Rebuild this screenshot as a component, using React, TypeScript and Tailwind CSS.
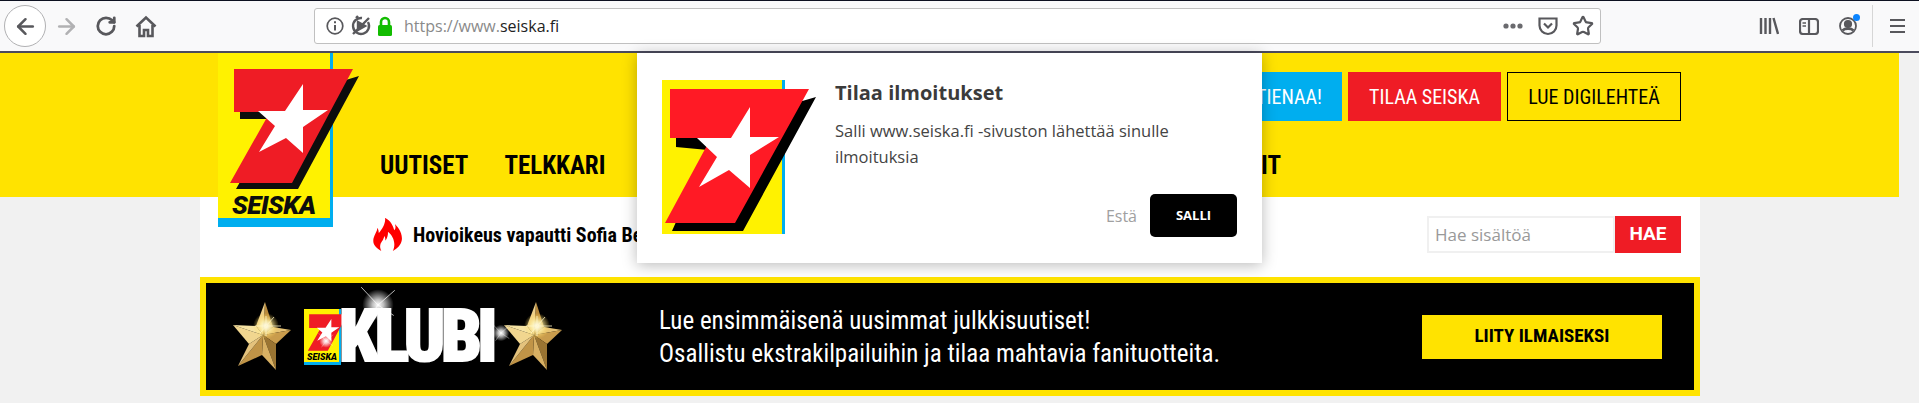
import { ArrowLeft, ArrowRight, RotateCw, Star } from "lucide-react";
import { ImFire } from "react-icons/im";

const roboto = { fontFamily: "Roboto, sans-serif" };
const openSans = { fontFamily: '"Open Sans", sans-serif' };

// the red seven with its star, coordinates are in a 123x154 box
function SevenMark() {
  return (
    <>
      <polygon points="154,17 81,151 10,151 46,70 14,67 14,58" fill="#000" />
      <polygon points="8,9 147,9 73,143 3,143 49,58 8,58" fill="#ff1a25" />
      <polygon points="88,27 88,57 117,57 88,75 88,108 67,90 37,107 55,77 35,58 69,58" fill="#fff" />
    </>
  );
}

function BigLogo() {
  return (
    <div className="absolute left-[18px] top-0 h-[174px] w-[115px] bg-[#00aeef]">
      <div className="h-[165px] w-[112px] bg-[#fff200]" />
      <svg className="absolute left-0 top-0 overflow-visible" width="115" height="174">
        <polygon points="141,23 80,136 18,136 58,66 22,66 22,59" fill="#0d0d0d" />
        <polygon points="16,16 135,16 74,130 12,130 52,59 16,59" fill="#ef1c25" />
        <polygon points="85,31 85,57 110,57 85,74 85,100 68,85 41,99 57,73 40,58 67,58" fill="#fff" />
      </svg>
      <span
        className="absolute left-[14px] top-[137px] text-[26px] leading-[30px] font-black italic tracking-[-0.5px] text-[#0d0d0d]"
        style={roboto}
      >
        SEISKA
      </span>
    </div>
  );
}

function NotificationPopup() {
  return (
    <div className="absolute left-[437px] top-0 z-10 h-[210px] w-[625px] bg-white shadow-[0_2px_14px_rgba(0,0,0,0.28)]">
      <div className="flex pl-[25px] pt-[27px]">
        <div className="relative h-[154px] w-[123px] shrink-0 bg-[#fff200]">
          <div className="absolute right-0 top-0 h-full w-[3px] bg-[#00aeef]" />
          <svg className="absolute left-0 top-0 overflow-visible" width="123" height="154">
            <SevenMark />
          </svg>
        </div>
        <div className="ml-[50px] w-[402px]" style={openSans}>
          <h3 className="text-[20px] leading-[26px] font-bold text-[#3b3b3b]">Tilaa ilmoitukset</h3>
          <p className="mt-[12px] text-[16.5px] leading-[26px] text-[#444]">
            Salli www.seiska.fi -sivuston lähettää sinulle ilmoituksia
          </p>
          <div className="mt-[24px] flex items-center justify-end gap-[13px]">
            <span className="text-[16px] text-[#a0a0a0]">Estä</span>
            <span className="flex h-[43px] w-[87px] items-center justify-center rounded-[5px] bg-black text-[13px] font-bold text-white">
              SALLI
            </span>
          </div>
        </div>
      </div>
    </div>
  );
}

function Toolbar() {
  return (
    <div className="flex h-[53px] items-center border-t border-b-2 border-t-[#0c1020] border-b-[#4a4a5c] bg-[#f9f9fa] text-[#58585c]">
      <div className="ml-[4px] flex h-[42px] w-[42px] items-center justify-center rounded-full border border-[#b1b1b3] bg-white">
        <ArrowLeft size={25} strokeWidth={2.4} />
      </div>
      <ArrowRight size={25} strokeWidth={2.4} className="ml-[8px] text-[#b1b1b3]" />
      <RotateCw size={22} strokeWidth={3} className="ml-[16px]" />
      <svg className="ml-[18px]" width="22" height="23" viewBox="0 0 22 23" fill="none" stroke="currentColor" strokeWidth="2.6">
        <path d="M1.5 11.5 11 2.5 20.5 11.5M4.5 10V21H9V15H13V21H17.5V10" />
      </svg>
      <div className="ml-[157px] flex h-[36px] w-[1287px] items-center rounded-[3px] border border-[#c0c0c0] bg-white">
        <svg className="ml-[11px]" width="18" height="18" viewBox="0 0 18 18" fill="none" stroke="currentColor" strokeWidth="1.7">
          <circle cx="9" cy="9" r="7.8" />
          <path d="M9 8V13.5M9 4.2V6.2" strokeWidth="2" />
        </svg>
        <svg className="ml-[6px]" width="22" height="22" viewBox="0 0 22 22" fill="none" stroke="currentColor" strokeWidth="2.4">
          <path d="M18 7A8 8 0 1 1 12 3M6 3 8 1M3 19 19 3" />
          <path d="M8 7V15L15 11Z" fill="currentColor" />
        </svg>
        <svg className="ml-[5px]" width="16" height="21" viewBox="0 0 16 21">
          <path d="M4 10V6A4 4 0 0 1 12 6V10" fill="none" stroke="#12bc00" strokeWidth="2.6" />
          <rect x="1" y="9" width="14" height="11" rx="1.5" fill="#12bc00" />
        </svg>
        <span className="ml-[11px] text-[16px] text-[#8a8a8a]" style={openSans}>
          https://www.<span className="text-[#222]">seiska.fi</span>
        </span>
        <span className="ml-auto text-[#6a6a6e]">
          <svg width="20" height="6" viewBox="0 0 20 6" fill="currentColor">
            <circle cx="3" cy="3" r="2.6" />
            <circle cx="10" cy="3" r="2.6" />
            <circle cx="17" cy="3" r="2.6" />
          </svg>
        </span>
        <svg className="ml-[15px]" width="20" height="19" viewBox="0 0 20 19" fill="none" stroke="currentColor" strokeWidth="2.2">
          <path d="M1.5 1.5H18.5V8.5A8.5 8.5 0 0 1 1.5 8.5Z" />
          <path d="M6 6.5 10 10.5 14 6.5" />
        </svg>
        <Star size={22} strokeWidth={2.4} className="ml-[14px] mr-[6px]" />
      </div>
      <svg className="ml-[158px]" width="20" height="18" viewBox="0 0 20 18" fill="none" stroke="currentColor" strokeWidth="2.4">
        <path d="M2 1V17M6.5 1V17M11 1V17M14.5 1 19 17" />
      </svg>
      <svg className="ml-[20px]" width="20" height="17" viewBox="0 0 20 17" fill="none" stroke="currentColor" strokeWidth="2.2">
        <rect x="1" y="1" width="18" height="15" rx="3" />
        <path d="M10 1V16" />
        <path d="M3.5 5H7M3.5 8H7" strokeWidth="1.4" />
      </svg>
      <div className="relative ml-[20px] h-[18px] w-[18px]">
        <svg width="18" height="18" viewBox="0 0 18 18" fill="none" stroke="currentColor" strokeWidth="1.8">
          <circle cx="9" cy="9" r="8" />
          <circle cx="9" cy="7" r="3.2" fill="currentColor" />
          <path d="M3.5 13.5C6 11 12 11 14.5 13.5" strokeWidth="2.6" />
        </svg>
        <div className="absolute right-[-3px] top-[-3px] h-[7px] w-[7px] rounded-full bg-[#0a84ff]" />
      </div>
      <div className="ml-[15px] h-[42px] w-[1px] bg-[#d6d6d6]" />
      <div className="ml-[17px] flex w-[15px] flex-col gap-[4px]">
        <div className="h-[2px] bg-current" />
        <div className="h-[2px] bg-current" />
        <div className="h-[2px] bg-current" />
      </div>
    </div>
  );
}

function GoldStar({ className, id }: { className: string; id: string }) {
  return (
    <svg className={className} width="60" height="70" viewBox="0 0 60 70">
      <defs>
        <radialGradient id={id}>
          <stop offset="0" stopColor="#fff" />
          <stop offset="0.4" stopColor="#fff4b0" stopOpacity="0.8" />
          <stop offset="1" stopColor="#ffd24a" stopOpacity="0" />
        </radialGradient>
      </defs>
      {/* light and dark facets around the middle */}
      <polygon points="30,33 32,0 40,25" fill="#b98a3c" />
      <polygon points="30,33 40,25 58,28" fill="#e6c274" />
      <polygon points="30,33 58,28 43,42" fill="#c99c4c" />
      <polygon points="30,33 43,42 43,68" fill="#9a7432" />
      <polygon points="30,33 43,68 29,53" fill="#d8b063" />
      <polygon points="30,33 29,53 5,64" fill="#c09447" />
      <polygon points="30,33 5,64 16,42" fill="#e4c27c" />
      <polygon points="30,33 16,42 0,23" fill="#f1d68f" />
      <polygon points="30,33 0,23 23,24" fill="#f6e3a3" />
      <polygon points="30,33 23,24 32,0" fill="#eed08a" />
      <circle cx="33" cy="24" r="13" fill={`url(#${id})`} />
      <path d="M22 24H48M33 14V34M41 15 27 31" stroke="#fff6c8" strokeWidth="0.8" />
    </svg>
  );
}

// thin four point flare drawn over the wordmark
function Sparkle({ className, size }: { className: string; size: number }) {
  return (
    <svg className={className} width={size} height={size} viewBox="0 0 40 40">
      <defs>
        <radialGradient id="flare">
          <stop offset="0" stopColor="#fff" />
          <stop offset="0.35" stopColor="#fff" stopOpacity="0.75" />
          <stop offset="1" stopColor="#fff" stopOpacity="0" />
        </radialGradient>
      </defs>
      <circle cx="20" cy="20" r="15" fill="url(#flare)" />
      <path d="M4 3 20 20 36 6M20 20 10 34M20 20 35 30" stroke="#fff" strokeOpacity="0.85" strokeWidth="0.8" fill="none" />
    </svg>
  );
}

function KlubiLogo() {
  return (
    <div className="ml-[27px] flex items-center">
      <GoldStar className="shrink-0" id="glint-left" />
      <div className="relative ml-[11px] h-[56px] w-[37px] shrink-0 bg-[#00aeef]">
        <div className="h-[53px] w-[35px] bg-[#fff200]" />
        <svg className="absolute left-0 top-0 overflow-visible" width="37" height="56" viewBox="0 0 115 174">
          <polygon points="16,16 135,16 74,130 12,130 52,59 16,59" fill="#ef1c25" />
          <polygon points="85,31 85,57 110,57 85,74 85,100 68,85 41,99 57,73 40,58 67,58" fill="#fff" />
        </svg>
        <span className="absolute bottom-[3px] left-[3px] text-[9px] leading-[10px] font-black italic text-black" style={roboto}>
          SEISKA
        </span>
      </div>
      <div className="relative ml-[-2px] w-[157px] whitespace-nowrap">
        <span
          className="block text-[72px] leading-[50px] font-black tracking-[-4.5px] text-white [font-stretch:75%] [-webkit-text-stroke:2px_white]"
          style={roboto}
        >
          KLUBI
        </span>
        <Sparkle className="absolute left-[18px] top-[-28px]" size={42} />
        <Sparkle className="absolute right-[-16px] top-[10px]" size={22} />
        <Sparkle className="absolute left-[-22px] top-[20px]" size={18} />
      </div>
      <GoldStar className="ml-[8px] shrink-0" id="glint-right" />
    </div>
  );
}

export default function App() {
  return (
    <div className="h-[403px] w-[1919px] overflow-hidden bg-[#f1f1f1]">
      <Toolbar />
      <div className="w-[1899px]">
        <div className="h-[144px] bg-[#ffe300]">
          <div className="relative ml-[200px] h-full w-[1500px]">
            <BigLogo />
            <NotificationPopup />
            <div className="flex justify-end gap-[6px] whitespace-nowrap pr-[19px] pt-[19px] text-[20px] [font-stretch:75%]" style={roboto}>
              <span className="flex h-[49px] w-[190px] items-center justify-end bg-[#00aeef] pr-[20px] text-white">ANSAITSE JA TIENAA!</span>
              <span className="flex h-[49px] w-[153px] items-center justify-center bg-[#ef1c25] text-white">TILAA SEISKA</span>
              <span className="flex h-[49px] w-[174px] items-center justify-center border border-black text-black">LUE DIGILEHTEÄ</span>
            </div>
            <div className="mt-[31px] flex gap-[36px] pl-[180px] text-[25px] leading-[28px] font-bold text-black [font-stretch:75%]" style={roboto}>
              <span>UUTISET</span>
              <span>TELKKARI</span>
              <span className="ml-auto pr-[419px]">KOLUMNIT</span>
            </div>
          </div>
        </div>
        <div className="ml-[200px] w-[1500px] bg-white">
          <div className="flex h-[80px] items-start pl-[171px] pr-[19px] pt-[19px]">
            <ImFire className="mt-[2px] text-[#f00]" size={33} />
            <span className="ml-[9px] mt-[7px] text-[20px] leading-[24px] font-bold text-black [font-stretch:75%]" style={roboto}>
              Hovioikeus vapautti Sofia Belórfin
            </span>
            <div className="ml-auto flex h-[37px]">
              <span className="flex w-[188px] items-center border-2 border-[#f0f0f0] pl-[6px] text-[17px] text-[#999]" style={openSans}>
                Hae sisältöä
              </span>
              <span className="flex w-[66px] items-center justify-center bg-[#ef1c25] text-[19px] font-bold text-white" style={roboto}>
                HAE
              </span>
            </div>
          </div>
          <div className="h-[119px] border-[6px] border-[#ffe300] bg-black">
            <div className="flex h-full items-center">
              <KlubiLogo />
              <div className="ml-[95px] text-[25px] leading-[33px] text-white [font-stretch:75%]" style={roboto}>
                <p>Lue ensimmäisenä uusimmat julkkisuutiset!</p>
                <p>Osallistu ekstrakilpailuihin ja tilaa mahtavia fanituotteita.</p>
              </div>
              <span
                className="ml-auto mr-[32px] flex h-[44px] w-[240px] items-center justify-center bg-[#ffe300] text-[19px] font-bold text-black [font-stretch:75%]"
                style={roboto}
              >
                LIITY ILMAISEKSI
              </span>
            </div>
          </div>
        </div>
      </div>
    </div>
  );
}
